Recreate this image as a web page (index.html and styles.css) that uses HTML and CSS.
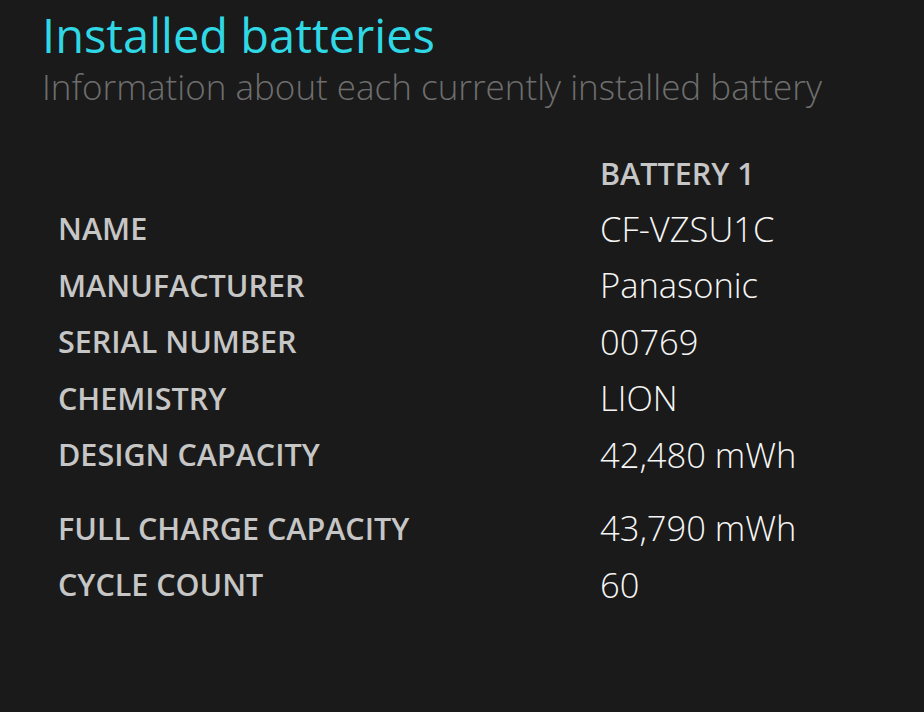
FILE: index.html
```html
<!DOCTYPE html>
<html>
<head>
<meta charset="utf-8">
<link rel="stylesheet" href="styles.css">
</head>
<body>
<div class="page">
  <h1 class="title">Installed batteries</h1>
  <p class="subtitle">Information about each currently installed battery</p>
  <div class="table">
    <div class="row head"><span class="label"></span><span class="col-head">BATTERY 1</span></div>
    <div class="row"><span class="label">NAME</span><span class="value">CF-VZSU1C</span></div>
    <div class="row"><span class="label">MANUFACTURER</span><span class="value">Panasonic</span></div>
    <div class="row"><span class="label">SERIAL NUMBER</span><span class="value">00769</span></div>
    <div class="row"><span class="label">CHEMISTRY</span><span class="value">LION</span></div>
    <div class="row"><span class="label">DESIGN CAPACITY</span><span class="value">42,480 mWh</span></div>
    <div class="row spaced"><span class="label">FULL CHARGE CAPACITY</span><span class="value">43,790 mWh</span></div>
    <div class="row"><span class="label">CYCLE COUNT</span><span class="value">60</span></div>
  </div>
</div>
</body>
</html>
```
FILE: styles.css
```css
html, body {
  margin: 0;
  padding: 0;
  background: #1a1a1a;
  height: 100%;
}
.page {
  padding: 8px 0 0 42px;
  font-family: "Open Sans", "Noto Sans", sans-serif;
}
.title {
  margin: 0;
  font-size: 47px;
  font-weight: 400;
  color: #2fd8e4;
  line-height: 54px;
}
.subtitle {
  margin: 3px 0 0;
  font-size: 35px;
  font-weight: 300;
  color: #6e6e6e;
  line-height: 44px;
  white-space: nowrap;
}
.table {
  margin-top: 43px;
  padding-left: 16px;
  display: flex;
  flex-direction: column;
}
.row {
  display: grid;
  grid-template-columns: 542px auto;
  align-items: center;
  height: 56.5px;
}
.row.spaced {
  margin-top: 17px;
}
.row.head {
  height: 30px;
  margin-bottom: 18px;
}
.label {
  font-size: 30.5px;
  font-weight: 600;
  color: #c6c6c6;
  white-space: nowrap;
}
.col-head {
  font-size: 30.5px;
  font-weight: 600;
  color: #c6c6c6;
}
.value {
  font-size: 34.5px;
  font-weight: 300;
  color: #f5f5f5;
  white-space: nowrap;
}
```
